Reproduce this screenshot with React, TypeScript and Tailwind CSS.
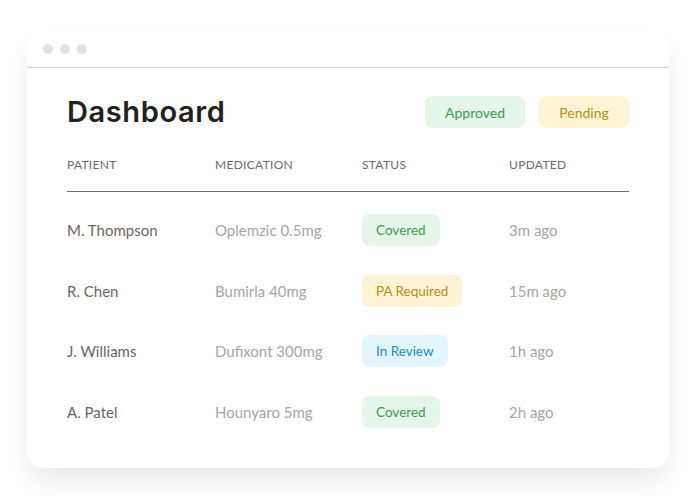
const rows = [
  { patient: 'M. Thompson', med: 'Oplemzic 0.5mg', status: 'Covered', updated: '3m ago' },
  { patient: 'R. Chen', med: 'Bumirla 40mg', status: 'PA Required', updated: '15m ago' },
  { patient: 'J. Williams', med: 'Dufixont 300mg', status: 'In Review', updated: '1h ago' },
  { patient: 'A. Patel', med: 'Hounyaro 5mg', status: 'Covered', updated: '2h ago' },
];

const badgeStyle: Record<string, string> = {
  Covered: 'bg-[#e6f5ea] text-[#3d9a4c]',
  'PA Required': 'bg-[#fff3d6] text-[#b88f12]',
  'In Review': 'bg-[#e3f5fd] text-[#2a8bc4]',
};

const cols = 'grid grid-cols-[148px_147px_147px_1fr]';

export default function App() {
  return (
    <div className="min-h-[503px] bg-white pl-[27px] pr-[28px] pt-[30px] font-['Lato',sans-serif]">
      <div className="rounded-2xl bg-white shadow-[0_14px_26px_-4px_rgba(0,0,0,0.1)]">
        {/* window chrome */}
        <div className="flex h-[38px] items-center gap-[7px] border-b border-[#d8d3cf] pl-4">
          <span className="h-[10px] w-[10px] rounded-full bg-[#e6e1dd]" />
          <span className="h-[10px] w-[10px] rounded-full bg-[#e6e1dd]" />
          <span className="h-[10px] w-[10px] rounded-full bg-[#e6e1dd]" />
        </div>

        <div className="px-10 pt-7 pb-[26px]">
          <div className="flex h-8 items-center justify-between">
            <h1 className="font-['Inter',sans-serif] text-[29px] font-semibold tracking-[0.6px] text-[#222120]">
              Dashboard
            </h1>
            <div className="flex gap-[14px]">
              <span className="flex h-8 w-[100px] items-center justify-center rounded-lg bg-[#e6f5ea] text-[14px] text-[#3d9a4c]">
                Approved
              </span>
              <span className="flex h-8 w-[90px] items-center justify-center rounded-lg bg-[#fff3d6] text-[14px] text-[#b88f12]">
                Pending
              </span>
            </div>
          </div>

          <div className={`${cols} border-b border-[#6f6a66] pt-[26px] pb-[15px] text-[12px] leading-[22px] tracking-[0.3px] text-[#6f6a66]`}>
            <span>PATIENT</span>
            <span>MEDICATION</span>
            <span>STATUS</span>
            <span>UPDATED</span>
          </div>

          <div className="pt-2">
            {rows.map((r) => (
              <div key={r.patient} className={`${cols} h-[60.5px] items-center text-[15px]`}>
                <span className="text-[#6b6561]">{r.patient}</span>
                <span className="text-[#aaa5a1]">{r.med}</span>
                <span>
                  <span className={`inline-flex h-8 items-center rounded-lg px-[14px] text-[13.5px] ${badgeStyle[r.status]}`}>
                    {r.status}
                  </span>
                </span>
                <span className="text-[#aaa5a1]">{r.updated}</span>
              </div>
            ))}
          </div>
        </div>
      </div>
    </div>
  );
}
